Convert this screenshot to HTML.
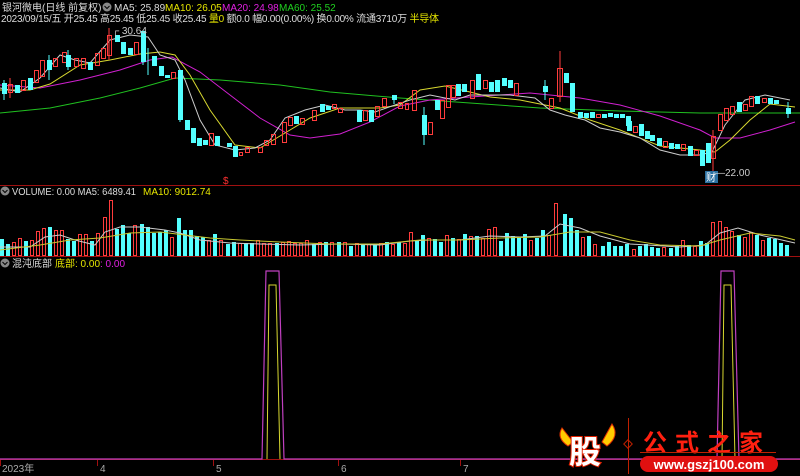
<!DOCTYPE html>
<html><head><meta charset="utf-8"><style>
body{margin:0;background:#000;width:800px;height:476px;overflow:hidden;font-family:"Liberation Sans","Noto Sans CJK SC",sans-serif}
svg{position:absolute;left:0;top:0}
.t{font-size:10px;font-family:"Liberation Sans","Noto Sans CJK SC",sans-serif}
.u{fill:none;stroke:#ff3c3c;stroke-width:1}
.d{fill:#54ffff}
</style></head><body>
<svg width="800" height="476" viewBox="0 0 800 476">
<line x1="0" y1="185.5" x2="800" y2="185.5" stroke="#a01010"/>
<line x1="0" y1="256.5" x2="800" y2="256.5" stroke="#a01010"/>
<line x1="0" y1="459.5" x2="800" y2="459.5" stroke="#a01010"/>
<text x="2" y="11" class="t" fill="#ddd">银河微电(日线 前复权)</text>
<circle cx="107" cy="7" r="4.5" fill="#888"/><path d="M104.5 6 L107 8.5 L109.5 6" stroke="#000" fill="none"/>
<text x="114" y="11" class="t" fill="#ddd">MA5: 25.89</text>
<text x="165" y="11" class="t" fill="#e6e600">MA10: 26.05</text>
<text x="222" y="11" class="t" fill="#e020e0">MA20: 24.98</text>
<text x="279" y="11" class="t" fill="#20d020">MA60: 25.52</text>
<text x="1" y="22" class="t" fill="#ddd" textLength="438" lengthAdjust="spacing">2023/09/15/五 开25.45 高25.45 低25.45 收25.45 <tspan fill="#e6e600">量0</tspan> 额0.0 幅0.00(0.00%) 换0.00% 流通3710万 <tspan fill="#e6e600">半导体</tspan></text>
<polyline fill="none" stroke="#20c020" points="0,113 50,108 100,98 140,88 175,78 220,80 280,85 330,92 400,98 470,103 540,108 620,111 700,113 800,113"/>
<polyline fill="none" stroke="#d020d0" points="0,85 40,88 80,80 120,70 150,60 172,57 200,72 230,95 260,118 290,135 310,138 340,134 370,122 400,106 430,100 470,97 530,93 580,98 620,105 660,116 700,130 715,138 740,138 770,130 795,122"/>
<polyline fill="none" stroke="#d8d830" points="0,90 30,90 50,84 80,65 110,60 140,54 160,52 175,55 190,75 210,110 235,145 260,148 290,130 310,118 340,108 380,108 400,105 420,90 445,86 470,92 490,97 520,100 560,108 590,120 620,130 660,146 700,150 715,152 730,140 750,120 770,104 795,107"/>
<polyline fill="none" stroke="#ccc" points="0,88 20,92 40,78 60,55 75,60 90,63 110,40 130,35 148,37 160,55 175,60 185,80 200,120 215,145 235,150 255,148 270,140 285,118 305,110 325,105 345,110 360,110 375,112 392,106 410,100 430,95 455,100 470,95 490,95 510,95 535,98 550,110 565,115 585,120 600,128 620,132 640,138 660,150 680,155 700,155 712,152 725,125 745,100 765,95 790,100"/>
<g>
<line x1="4" y1="80" x2="4" y2="100" stroke="#54ffff"/><rect class="d" x="2" y="83" width="5" height="11"/>
<line x1="10" y1="78" x2="10" y2="98" stroke="#ff3c3c"/><rect class="u" x="8.5" y="84.5" width="4" height="8"/>
<rect class="d" x="15" y="85" width="5" height="8"/>
<rect class="u" x="21.5" y="80.5" width="4" height="10"/>
<rect class="d" x="28" y="78" width="5" height="12"/>
<rect class="u" x="34.5" y="70.5" width="4" height="12"/>
<rect class="u" x="40.5" y="60.5" width="4" height="16"/>
<line x1="49" y1="55" x2="49" y2="80" stroke="#54ffff"/><rect class="d" x="47" y="60" width="5" height="10"/>
<rect class="u" x="53.5" y="58.5" width="4" height="8"/>
<rect class="u" x="62.5" y="52.5" width="4" height="10"/>
<line x1="68" y1="50" x2="68" y2="70" stroke="#54ffff"/><rect class="d" x="66" y="55" width="5" height="12"/>
<rect class="u" x="74.5" y="58.5" width="4" height="8"/>
<rect class="u" x="81.5" y="58.5" width="4" height="10"/>
<rect class="d" x="88" y="62" width="5" height="8"/>
<rect class="u" x="95.5" y="53.5" width="4" height="12"/>
<rect class="u" x="101.5" y="48.5" width="4" height="10"/>
<line x1="109" y1="28" x2="109" y2="60" stroke="#ff3c3c"/><rect class="u" x="107.5" y="35.5" width="4" height="20"/>
<rect class="d" x="115" y="35" width="5" height="7"/>
<rect class="d" x="121" y="42" width="5" height="12"/>
<rect class="d" x="128" y="48" width="5" height="7"/>
<rect class="u" x="134.5" y="42.5" width="4" height="12"/>
<line x1="143" y1="30" x2="143" y2="65" stroke="#54ffff"/><rect class="d" x="141" y="31" width="5" height="31"/>
<line x1="148" y1="48" x2="148" y2="75" stroke="#54ffff"/>
<rect class="d" x="152" y="56" width="5" height="10"/>
<rect class="d" x="159" y="66" width="5" height="10"/>
<rect class="d" x="165" y="75" width="5" height="3"/>
<rect class="u" x="171.5" y="72.5" width="4" height="6"/>
<line x1="180" y1="70" x2="180" y2="122" stroke="#54ffff"/><rect class="d" x="178" y="70" width="5" height="50"/>
<rect class="d" x="185" y="120" width="5" height="10"/>
<rect class="d" x="191" y="128" width="5" height="15"/>
<rect class="d" x="197" y="138" width="5" height="8"/>
<rect class="d" x="203" y="140" width="5" height="5"/>
<rect class="u" x="209.5" y="133.5" width="4" height="12"/>
<rect class="d" x="215" y="136" width="5" height="10"/>
<rect class="d" x="227" y="143" width="5" height="4"/>
<rect class="d" x="233" y="146" width="5" height="11"/>
<rect class="u" x="239.5" y="152.5" width="3" height="3"/>
<rect class="u" x="245.5" y="147.5" width="4" height="5"/>
<rect class="u" x="258.5" y="147.5" width="4" height="5"/>
<rect class="u" x="264.5" y="140.5" width="4" height="5"/>
<rect class="u" x="271.5" y="134.5" width="4" height="10"/>
<rect class="u" x="282.5" y="122.5" width="4" height="20"/>
<rect class="u" x="288.5" y="117.5" width="4" height="8"/>
<rect class="d" x="294" y="116" width="5" height="8"/>
<rect class="u" x="300.5" y="118.5" width="4" height="6"/>
<rect class="u" x="312.5" y="110.5" width="4" height="10"/>
<rect class="d" x="320" y="104" width="5" height="8"/>
<rect class="d" x="326" y="106" width="5" height="4"/>
<rect class="u" x="332.5" y="104.5" width="4" height="4"/>
<rect class="u" x="338.5" y="108.5" width="4" height="4"/>
<rect class="d" x="357" y="110" width="5" height="12"/>
<rect class="u" x="363.5" y="110.5" width="4" height="10"/>
<rect class="d" x="369" y="110" width="5" height="12"/>
<rect class="u" x="375.5" y="106.5" width="4" height="10"/>
<rect class="u" x="382.5" y="98.5" width="4" height="8"/>
<line x1="394" y1="96" x2="394" y2="104" stroke="#54ffff"/><rect class="d" x="392" y="95" width="5" height="5"/>
<rect class="u" x="398.5" y="102.5" width="4" height="6"/>
<rect class="u" x="405.5" y="103.5" width="3" height="6"/>
<rect class="u" x="412.5" y="90.5" width="4" height="20"/>
<line x1="424" y1="107" x2="424" y2="145" stroke="#54ffff"/><rect class="d" x="422" y="115" width="5" height="20"/>
<rect class="u" x="428.5" y="122.5" width="4" height="12"/>
<rect class="d" x="435" y="100" width="5" height="10"/>
<rect class="u" x="440.5" y="100.5" width="4" height="18"/>
<rect class="u" x="446.5" y="85.5" width="4" height="22"/>
<rect class="u" x="451.5" y="85.5" width="4" height="12"/>
<rect class="d" x="456" y="84" width="5" height="12"/>
<rect class="d" x="462" y="84" width="5" height="8"/>
<rect class="u" x="470.5" y="80.5" width="4" height="18"/>
<rect class="d" x="476" y="74" width="5" height="16"/>
<rect class="u" x="483.5" y="80.5" width="4" height="8"/>
<rect class="d" x="489" y="82" width="5" height="10"/>
<rect class="d" x="495" y="80" width="5" height="12"/>
<rect class="d" x="502" y="78" width="5" height="8"/>
<rect class="d" x="508" y="80" width="5" height="8"/>
<rect class="u" x="514.5" y="83.5" width="4" height="12"/>
<line x1="545" y1="80" x2="545" y2="100" stroke="#54ffff"/><rect class="d" x="543" y="86" width="5" height="6"/>
<rect class="u" x="549.5" y="98.5" width="4" height="10"/>
<line x1="560" y1="51" x2="560" y2="102" stroke="#ff3c3c"/><rect class="u" x="557.5" y="68.5" width="5" height="28"/>
<rect class="d" x="564" y="73" width="5" height="10"/>
<rect class="d" x="570" y="83" width="5" height="29"/>
<rect class="d" x="578" y="112" width="5" height="6"/>
<rect class="d" x="584" y="113" width="5" height="5"/>
<rect class="d" x="590" y="112" width="5" height="6"/>
<rect class="u" x="596.5" y="114.5" width="4" height="3"/>
<rect class="d" x="602" y="114" width="5" height="4"/>
<rect class="d" x="608" y="113" width="5" height="4"/>
<rect class="d" x="614" y="114" width="5" height="4"/>
<rect class="d" x="620" y="114" width="5" height="4"/>
<rect class="d" x="626" y="116" width="5" height="10"/>
<rect class="d" x="627" y="121" width="5" height="10"/>
<rect class="u" x="633.5" y="126.5" width="4" height="6"/>
<rect class="d" x="639" y="124" width="5" height="12"/>
<rect class="d" x="645" y="131" width="5" height="8"/>
<rect class="d" x="650" y="135" width="5" height="6"/>
<rect class="d" x="657" y="138" width="5" height="8"/>
<rect class="u" x="663.5" y="141.5" width="4" height="6"/>
<rect class="d" x="669" y="143" width="5" height="6"/>
<rect class="d" x="675" y="144" width="5" height="5"/>
<rect class="u" x="681.5" y="144.5" width="4" height="6"/>
<rect class="d" x="688" y="146" width="5" height="10"/>
<rect class="u" x="694.5" y="150.5" width="4" height="5"/>
<rect class="d" x="700" y="150" width="5" height="16"/>
<rect class="d" x="706" y="143" width="5" height="20"/>
<line x1="713" y1="130" x2="713" y2="172" stroke="#ff3c3c"/><rect class="u" x="711.5" y="136.5" width="4" height="22"/>
<rect class="u" x="718.5" y="114.5" width="4" height="16"/>
<rect class="u" x="724.5" y="108.5" width="4" height="12"/>
<rect class="u" x="730.5" y="106.5" width="4" height="8"/>
<rect class="d" x="737" y="102" width="5" height="10"/>
<rect class="u" x="743.5" y="104.5" width="4" height="6"/>
<rect class="u" x="749.5" y="96.5" width="4" height="10"/>
<rect class="d" x="755" y="96" width="5" height="8"/>
<rect class="u" x="762.5" y="98.5" width="4" height="4"/>
<rect class="d" x="768" y="98" width="5" height="6"/>
<rect class="d" x="774" y="100" width="5" height="4"/>
<line x1="788" y1="102" x2="788" y2="118" stroke="#54ffff"/><rect class="d" x="786" y="108" width="5" height="6"/>
</g>
<text x="112" y="34" font-size="9" fill="#ccc" class="t">┌ 30.64</text>
<text x="223" y="184" font-size="10" fill="#ff3030" class="t">$</text>
<rect x="705" y="171" width="13" height="12" fill="#2a6fa0"/>
<text x="706" y="181" class="t" fill="#fff">财</text>
<text x="715" y="176" class="t" fill="#ccc">—22.00</text>
<circle cx="5" cy="191" r="4.5" fill="#888"/><path d="M2.5 190 L5 192.5 L7.5 190" stroke="#000" fill="none"/>
<text x="12" y="195" class="t" fill="#ddd" textLength="124" lengthAdjust="spacingAndGlyphs">VOLUME: 0.00  MA5: 6489.41</text>
<text x="143" y="195" class="t" fill="#e6e600">MA10: 9012.74</text>
<g>
<rect class="d" x="0" y="239" width="4" height="17"/><rect class="d" x="6" y="244" width="4" height="12"/><rect class="u" x="12.5" y="242.5" width="3" height="13"/><rect class="u" x="18.5" y="238.5" width="3" height="17"/><rect class="d" x="24" y="241" width="4" height="15"/><rect class="u" x="30.5" y="240.5" width="3" height="15"/><rect class="u" x="36.5" y="231.5" width="3" height="24"/><rect class="u" x="42.5" y="228.5" width="3" height="27"/><rect class="d" x="48" y="227" width="4" height="29"/><rect class="u" x="54.5" y="230.5" width="3" height="25"/><rect class="u" x="60.5" y="230.5" width="3" height="25"/><rect class="d" x="66" y="239" width="4" height="17"/><rect class="d" x="72" y="241" width="4" height="15"/><rect class="u" x="78.5" y="234.5" width="3" height="21"/><rect class="u" x="84.5" y="234.5" width="3" height="21"/><rect class="d" x="90" y="241" width="4" height="15"/><rect class="u" x="96.5" y="233.5" width="3" height="22"/><rect class="u" x="103.5" y="217.5" width="3" height="38"/><rect class="u" x="109.5" y="200.5" width="3" height="55"/><rect class="d" x="115" y="229" width="4" height="27"/><rect class="d" x="121" y="225" width="4" height="31"/><rect class="d" x="127" y="233" width="4" height="23"/><rect class="u" x="133.5" y="225.5" width="3" height="30"/><rect class="d" x="140" y="224" width="4" height="32"/><rect class="d" x="146" y="227" width="4" height="29"/><rect class="d" x="152" y="233" width="4" height="23"/><rect class="d" x="158" y="232" width="4" height="24"/><rect class="d" x="164" y="230" width="4" height="26"/><rect class="u" x="170.5" y="237.5" width="3" height="18"/><rect class="d" x="177" y="218" width="4" height="38"/><rect class="d" x="183" y="230" width="4" height="26"/><rect class="d" x="189" y="230" width="4" height="26"/><rect class="d" x="195" y="236" width="4" height="20"/><rect class="d" x="201" y="237" width="4" height="19"/><rect class="u" x="207.5" y="240.5" width="3" height="15"/><rect class="d" x="213" y="234" width="4" height="22"/><rect class="u" x="219.5" y="240.5" width="3" height="15"/><rect class="d" x="226" y="244" width="4" height="12"/><rect class="d" x="232" y="242" width="4" height="14"/><rect class="u" x="238.5" y="243.5" width="3" height="12"/><rect class="d" x="244" y="243" width="4" height="13"/><rect class="d" x="250" y="243" width="4" height="13"/><rect class="u" x="256.5" y="240.5" width="3" height="15"/><rect class="u" x="262.5" y="243.5" width="3" height="12"/><rect class="u" x="268.5" y="243.5" width="3" height="12"/><rect class="d" x="275" y="243" width="4" height="13"/><rect class="u" x="281.5" y="242.5" width="3" height="13"/><rect class="u" x="287.5" y="241.5" width="3" height="14"/><rect class="u" x="293.5" y="243.5" width="3" height="12"/><rect class="u" x="299.5" y="243.5" width="3" height="12"/><rect class="u" x="305.5" y="240.5" width="3" height="15"/><rect class="d" x="312" y="244" width="4" height="12"/><rect class="u" x="318.5" y="242.5" width="3" height="13"/><rect class="d" x="324" y="242" width="4" height="14"/><rect class="u" x="330.5" y="242.5" width="3" height="13"/><rect class="d" x="337" y="242" width="4" height="14"/><rect class="u" x="343.5" y="242.5" width="3" height="13"/><rect class="d" x="349" y="246" width="4" height="10"/><rect class="u" x="355.5" y="243.5" width="3" height="12"/><rect class="d" x="361" y="244" width="4" height="12"/><rect class="u" x="367.5" y="244.5" width="3" height="11"/><rect class="d" x="373" y="244" width="4" height="12"/><rect class="u" x="379.5" y="243.5" width="3" height="12"/><rect class="d" x="385" y="242" width="4" height="14"/><rect class="u" x="391.5" y="244.5" width="3" height="11"/><rect class="d" x="397" y="242" width="4" height="14"/><rect class="u" x="403.5" y="243.5" width="3" height="12"/><rect class="u" x="409.5" y="232.5" width="3" height="23"/><rect class="d" x="415" y="240" width="4" height="16"/><rect class="d" x="421" y="235" width="4" height="21"/><rect class="u" x="427.5" y="238.5" width="3" height="17"/><rect class="d" x="433" y="239" width="4" height="17"/><rect class="d" x="439" y="242" width="4" height="14"/><rect class="u" x="445.5" y="235.5" width="3" height="20"/><rect class="d" x="451" y="238" width="4" height="18"/><rect class="u" x="457.5" y="239.5" width="3" height="16"/><rect class="d" x="463" y="234" width="4" height="22"/><rect class="u" x="469.5" y="236.5" width="3" height="19"/><rect class="d" x="475" y="236" width="4" height="20"/><rect class="u" x="481.5" y="238.5" width="3" height="17"/><rect class="u" x="487.5" y="229.5" width="3" height="26"/><rect class="u" x="493.5" y="227.5" width="3" height="28"/><rect class="d" x="499" y="241" width="4" height="15"/><rect class="d" x="505" y="233" width="4" height="23"/><rect class="d" x="511" y="236" width="4" height="20"/><rect class="d" x="517" y="238" width="4" height="18"/><rect class="d" x="523" y="234" width="4" height="22"/><rect class="u" x="529.5" y="240.5" width="3" height="15"/><rect class="d" x="535" y="238" width="4" height="18"/><rect class="d" x="541" y="230" width="4" height="26"/><rect class="u" x="547.5" y="235.5" width="3" height="20"/><rect class="u" x="554.5" y="203.5" width="3" height="52"/><rect class="d" x="563" y="214" width="4" height="42"/><rect class="d" x="569" y="218" width="4" height="38"/><rect class="d" x="575" y="230" width="4" height="26"/><rect class="u" x="581.5" y="237.5" width="3" height="18"/><rect class="d" x="587" y="236" width="4" height="20"/><rect class="u" x="593.5" y="244.5" width="3" height="11"/><rect class="d" x="601" y="246" width="4" height="10"/><rect class="d" x="607" y="242" width="4" height="14"/><rect class="d" x="613" y="246" width="4" height="10"/><rect class="d" x="619" y="246" width="4" height="10"/><rect class="d" x="625" y="244" width="4" height="12"/><rect class="u" x="632.5" y="249.5" width="3" height="6"/><rect class="d" x="638" y="246" width="4" height="10"/><rect class="d" x="644" y="244" width="4" height="12"/><rect class="d" x="650" y="247" width="4" height="9"/><rect class="d" x="656" y="248" width="4" height="8"/><rect class="u" x="662.5" y="247.5" width="3" height="8"/><rect class="d" x="669" y="248" width="4" height="8"/><rect class="d" x="675" y="246" width="4" height="10"/><rect class="u" x="681.5" y="240.5" width="3" height="15"/><rect class="d" x="687" y="245" width="4" height="11"/><rect class="u" x="693.5" y="246.5" width="3" height="9"/><rect class="d" x="699" y="241" width="4" height="15"/><rect class="d" x="705" y="243" width="4" height="13"/><rect class="u" x="711.5" y="222.5" width="3" height="33"/><rect class="u" x="718.5" y="221.5" width="3" height="34"/><rect class="u" x="724.5" y="227.5" width="3" height="28"/><rect class="u" x="730.5" y="231.5" width="3" height="24"/><rect class="d" x="737" y="235" width="4" height="21"/><rect class="u" x="743.5" y="237.5" width="3" height="18"/><rect class="u" x="749.5" y="232.5" width="3" height="23"/><rect class="d" x="755" y="235" width="4" height="21"/><rect class="u" x="761.5" y="240.5" width="3" height="15"/><rect class="d" x="767" y="238" width="4" height="18"/><rect class="d" x="773" y="239" width="4" height="17"/><rect class="d" x="779" y="243" width="4" height="13"/><rect class="d" x="785" y="245" width="4" height="11"/>
</g>
<polyline fill="none" stroke="#ccc" points="0,247 30,247 45,237 60,235 75,240 95,245 105,232 120,227 140,227 165,230 180,233 200,240 230,243 260,244 300,245 340,244 380,245 410,241 430,240 460,240 490,236 520,237 545,236 560,224 580,228 600,236 630,244 680,247 705,245 720,233 738,228 760,235 795,243"/>
<polyline fill="none" stroke="#c8c830" points="0,250 40,245 70,240 100,238 130,233 160,232 185,235 210,238 240,240 280,242 330,244 380,244 420,240 460,240 500,238 540,237 570,232 600,232 630,240 660,245 700,246 720,240 750,233 780,236 795,240"/>
<circle cx="5" cy="263" r="4.5" fill="#888"/><path d="M2.5 262 L5 264.5 L7.5 262" stroke="#000" fill="none"/>
<text x="12" y="267" class="t" fill="#ddd">混沌底部</text>
<text x="55" y="267" class="t" fill="#e6e600">底部: 0.00</text>
<text x="100" y="267" class="t" fill="#e020e0">: 0.00</text>
<polyline fill="none" stroke="#c040c0" stroke-width="1.2" points="0,459 262,459 266,271 279,271 284,459 717,459 721,271 734,271 739,459 800,459"/>
<polyline fill="none" stroke="#d8d830" points="267,459 269,285 276,285 280,459"/>
<polyline fill="none" stroke="#d8d830" points="722,459 724,285 731,285 735,459"/>
<g stroke="#a01010"><line x1="0.5" y1="460" x2="0.5" y2="466"/><line x1="97.5" y1="460" x2="97.5" y2="466"/><line x1="213.5" y1="460" x2="213.5" y2="466"/><line x1="338.5" y1="460" x2="338.5" y2="466"/><line x1="460.5" y1="460" x2="460.5" y2="466"/></g>
<text x="2" y="472" class="t" fill="#aaa">2023年</text>
<text x="100" y="472" class="t" fill="#aaa">4</text>
<text x="216" y="472" class="t" fill="#aaa">5</text>
<text x="341" y="472" class="t" fill="#aaa">6</text>
<text x="463" y="472" class="t" fill="#aaa">7</text>
<path d="M562 428 Q556 438 568 446 L573 442 Z" fill="#ffcc00" stroke="#e03000"/>
<path d="M612 424 Q620 436 607 446 L602 442 Z" fill="#ffcc00" stroke="#e03000"/>
<text x="569" y="463" font-size="32" font-weight="bold" fill="#fff" stroke="#e02000" stroke-width="2" paint-order="stroke" font-family="'Noto Sans CJK SC',sans-serif">股</text>
<line x1="628.5" y1="418" x2="628.5" y2="474" stroke="#c02000"/>
<rect x="625" y="441" width="6" height="6" transform="rotate(45 628 444)" fill="none" stroke="#c02000"/>
<text x="643" y="451" font-size="24" font-weight="bold" fill="#ff2010" letter-spacing="8" font-family="'Noto Sans CJK SC',sans-serif">公式之家</text>
<line x1="640" y1="452.5" x2="776" y2="452.5" stroke="#c02000"/>
<rect x="640" y="456" width="138" height="16" rx="8" fill="#e01010"/>
<text x="709" y="469" font-size="13" font-weight="bold" fill="#fff" text-anchor="middle" font-family="'Liberation Sans',sans-serif">www.gszj100.com</text>
</svg>
</body></html>
